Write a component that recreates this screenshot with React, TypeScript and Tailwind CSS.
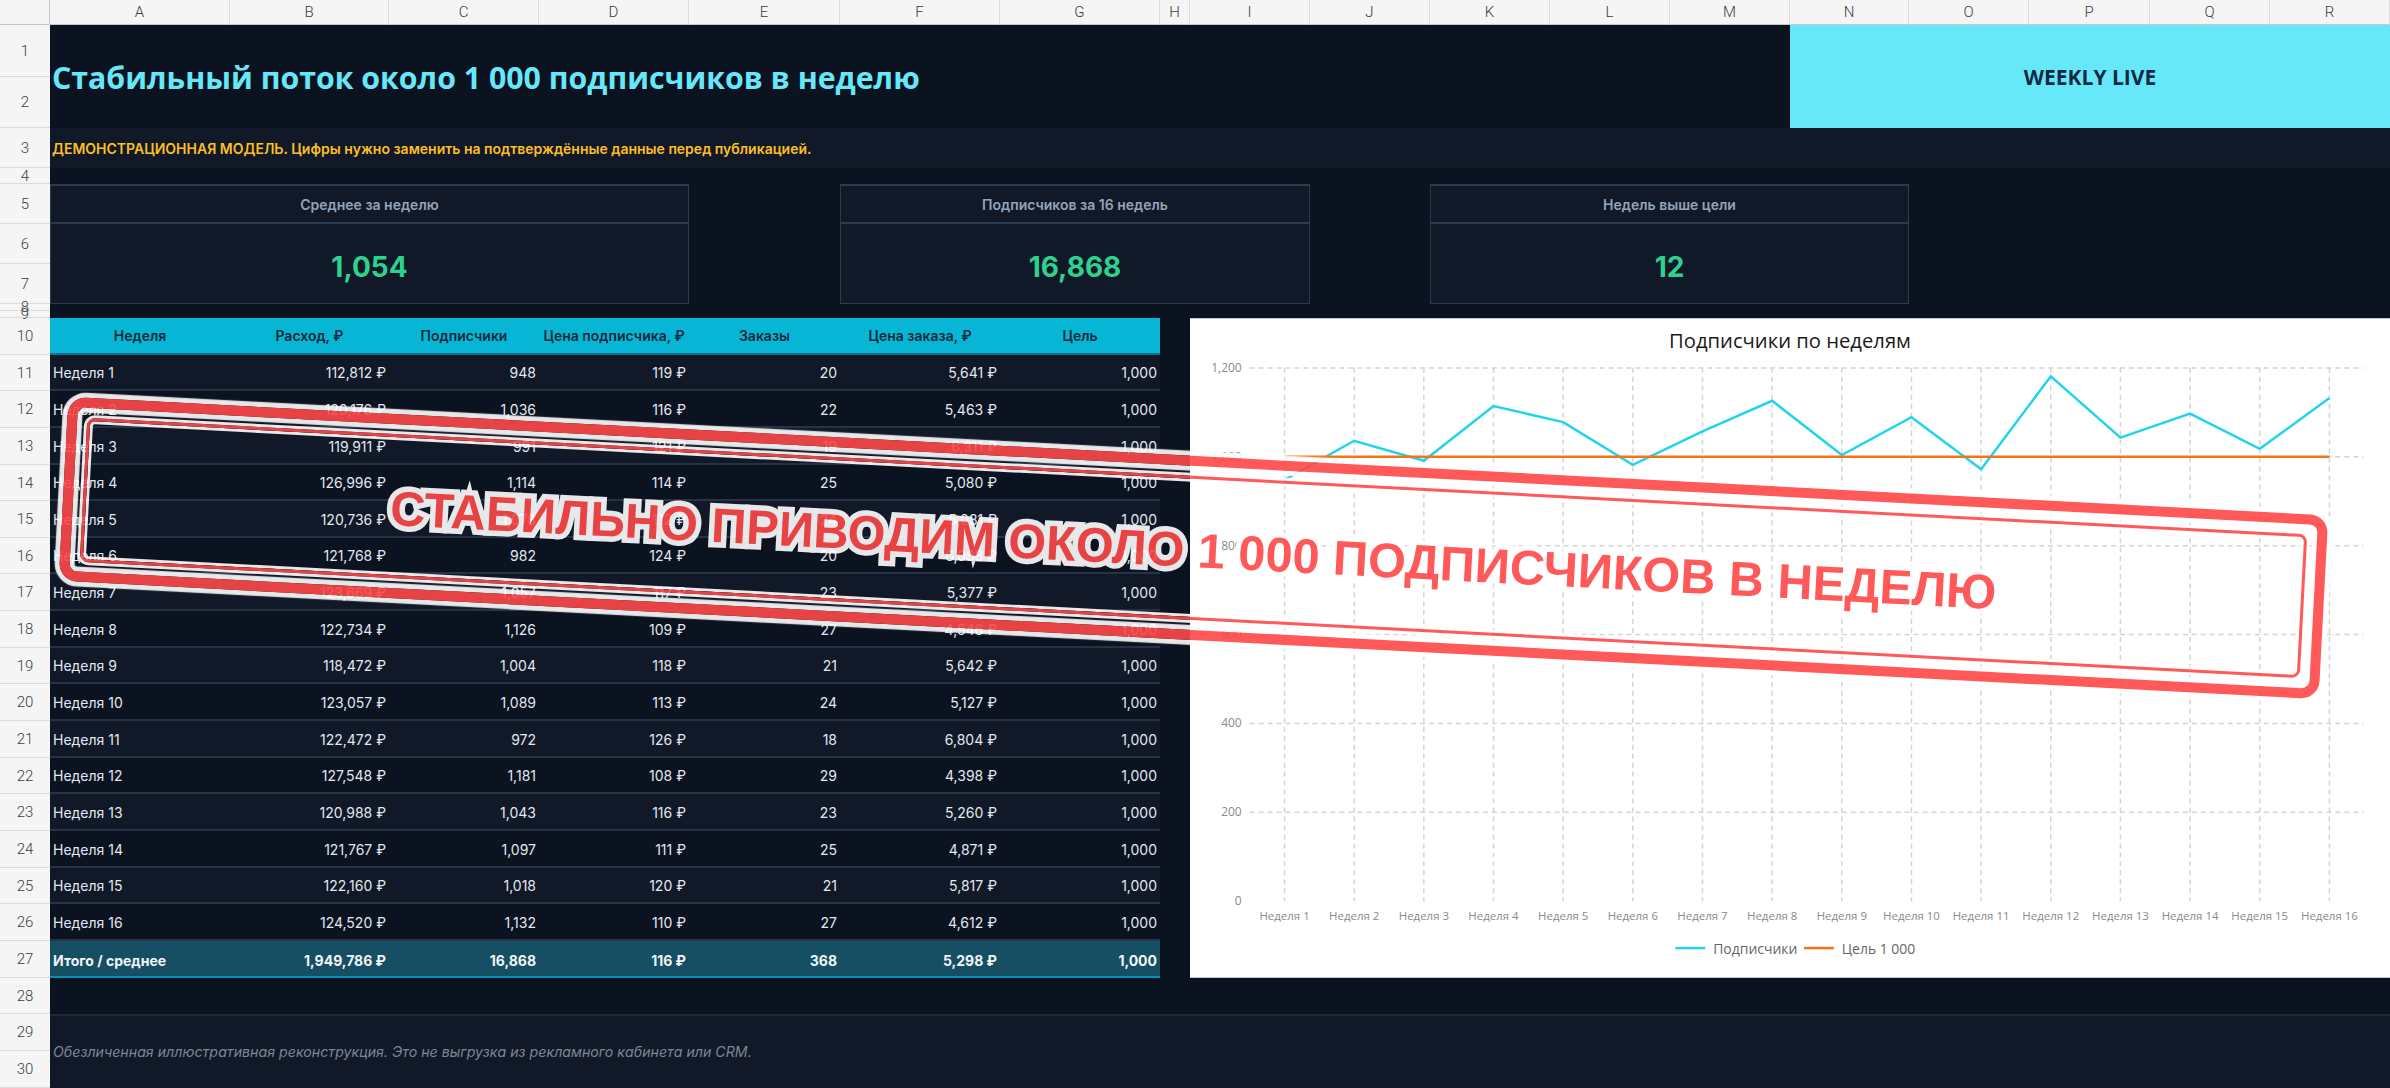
const columnLetters = "ABCDEFGHIJKLMNOPQR".split("");
const rowNumbers = Array.from({ length: 30 }, (_, i) => i + 1);

const weeks = [
  ["112,812 ₽", "948", "119 ₽", "20", "5,641 ₽", 948],
  ["120,176 ₽", "1,036", "116 ₽", "22", "5,463 ₽", 1036],
  ["119,911 ₽", "991", "121 ₽", "19", "6,311 ₽", 991],
  ["126,996 ₽", "1,114", "114 ₽", "25", "5,080 ₽", 1114],
  ["120,736 ₽", "1,078", "112 ₽", "24", "5,031 ₽", 1078],
  ["121,768 ₽", "982", "124 ₽", "20", "6,088 ₽", 982],
  ["123,669 ₽", "1,057", "117 ₽", "23", "5,377 ₽", 1057],
  ["122,734 ₽", "1,126", "109 ₽", "27", "4,546 ₽", 1126],
  ["118,472 ₽", "1,004", "118 ₽", "21", "5,642 ₽", 1004],
  ["123,057 ₽", "1,089", "113 ₽", "24", "5,127 ₽", 1089],
  ["122,472 ₽", "972", "126 ₽", "18", "6,804 ₽", 972],
  ["127,548 ₽", "1,181", "108 ₽", "29", "4,398 ₽", 1181],
  ["120,988 ₽", "1,043", "116 ₽", "23", "5,260 ₽", 1043],
  ["121,767 ₽", "1,097", "111 ₽", "25", "4,871 ₽", 1097],
  ["122,160 ₽", "1,018", "120 ₽", "21", "5,817 ₽", 1018],
  ["124,520 ₽", "1,132", "110 ₽", "27", "4,612 ₽", 1132],
] as const;

const headers = ["Неделя", "Расход, ₽", "Подписчики", "Цена подписчика, ₽", "Заказы", "Цена заказа, ₽", "Цель"];
const totals = ["1,949,786 ₽", "16,868", "116 ₽", "368", "5,298 ₽", "1,000"];

const KpiCard = ({ label, value, className }: { label: string; value: string; className: string }) => (
  <div className={`flex flex-col border border-[#2b3a4e] border-t-2 bg-[#111827] ${className}`}>
    <div className="flex h-[38px] items-center justify-center border-b-2 border-[#2b3a4e] text-[14px] font-semibold text-[#94a3b8]">
      {label}
    </div>
    <div className="flex flex-1 items-center justify-center pt-[6px] text-[28px] font-bold text-[#2dd290]">
      {value}
    </div>
  </div>
);

const xFor = (i: number) => 1283 + i * 69.87;
const yFor = (v: number) => 902 - v * 0.4458;

const WeeklyChart = () => {
  const points = weeks.map((w, i) => `${xFor(i)},${yFor(w[5])}`).join(" ");
  return (
    <svg viewBox="1190 318 1200 660" className="h-full w-full" fontFamily="'Open Sans', sans-serif">
      <text x="1790" y="347" textAnchor="middle" fontSize="20.3" fill="#1a1a1a">
        Подписчики по неделям
      </text>
      {[0, 200, 400, 600, 800, 1000, 1200].map((v) => (
        <g key={v}>
          {v > 0 && (
            <line x1="1248" x2="2365" y1={yFor(v)} y2={yFor(v)} stroke="#d4d4d4" strokeWidth="1.5" strokeDasharray="5 4" />
          )}
          <text x="1240" y={yFor(v) + 4} textAnchor="end" fontSize="12" fill="#8a8a8a">
            {v === 0 ? "0" : v.toLocaleString("en-US")}
          </text>
        </g>
      ))}
      {weeks.map((_, i) => (
        <g key={i}>
          <line x1={xFor(i)} x2={xFor(i)} y1="367" y2="902" stroke="#d4d4d4" strokeWidth="1.5" strokeDasharray="5 4" />
          <text x={xFor(i)} y="921" textAnchor="middle" fontSize="11.5" fill="#8a8a8a">
            {`Неделя ${i + 1}`}
          </text>
        </g>
      ))}
      <polyline points={points} fill="none" stroke="#22d3ee" strokeWidth="2.5" />
      <line x1={xFor(0)} x2={xFor(15)} y1={yFor(1000)} y2={yFor(1000)} stroke="#f97316" strokeWidth="2.5" />
      <line x1="1675" x2="1705" y1="949" y2="949" stroke="#22d3ee" strokeWidth="2.5" />
      <text x="1713" y="955" fontSize="14" fill="#666">
        Подписчики
      </text>
      <line x1="1804" x2="1834" y1="949" y2="949" stroke="#f97316" strokeWidth="2.5" />
      <text x="1842" y="955" fontSize="14" fill="#666">
        Цель 1 000
      </text>
    </svg>
  );
};

const Stamp = () => (
  <div className="absolute left-[62px] top-[456px] flex h-[184px] w-[2263px] rotate-[3deg] rounded-[18px] border-[10px] border-[#ff4848] p-[10px] opacity-90 shadow-[0_0_1px_5px_#fff,inset_0_0_1px_5px_#fff]">
    <div className="flex flex-1 items-center justify-center rounded-[8px] border-[3px] border-[#ff4848] pt-[6px] shadow-[0_0_0_3px_#fff,inset_0_0_0_3px_#fff]">
      <span className="whitespace-nowrap font-['Liberation_Sans',sans-serif] text-[48.7px] font-bold text-[#ff4848] [-webkit-text-stroke:11px_#fff] [paint-order:stroke_fill]">
        СТАБИЛЬНО ПРИВОДИМ ОКОЛО 1 000 ПОДПИСЧИКОВ В НЕДЕЛЮ
      </span>
    </div>
  </div>
);

export default function App() {
  return (
    <div className="relative h-[1088px] w-[2390px] overflow-hidden bg-[#0b1220] font-['Inter',sans-serif]">
      <div className="grid h-full w-full grid-cols-[50px_180px_159px_150px_150px_151px_160px_160px_30px_120px_120px_120px_120px_120px_119px_120px_121px_120px_120px] grid-rows-[25px_52px_51px_40px_16px_40px_40px_40px_7px_7px_37px_36px_37px_37px_36px_37px_36px_37px_37px_36px_37px_37px_36px_37px_37px_36px_37px_37px_36px_37px_37px]">
        {/* row headers */}
        <div className="col-[1/2] row-[1/32] grid grid-rows-subgrid bg-[#f5f5f5] font-['Roboto',sans-serif] text-[15px] font-light text-[#3c3c3c]">
          <div className="border-b border-r border-[#c8c8c8]" />
          {rowNumbers.map((n) => (
            <div key={n} className="flex items-center justify-center overflow-visible border-b border-[#dcdcdc] pt-[1px]">
              {n}
            </div>
          ))}
        </div>

        {/* column headers */}
        <div className="col-[2/20] row-[1/2] grid grid-cols-subgrid bg-[#f5f5f5] font-['Roboto',sans-serif] text-[15px] font-light text-[#3c3c3c]">
          {columnLetters.map((c) => (
            <div key={c} className="flex items-center justify-center border-b border-r border-b-[#c8c8c8] border-r-[#dcdcdc]">
              {c}
            </div>
          ))}
        </div>

        {/* title */}
        <div className="col-[2/15] row-[2/4] flex items-center pl-[2px] pt-[2px] font-['Open_Sans',sans-serif] text-[30.3px] font-bold text-[#67e8f9]">
          Стабильный поток около 1 000 подписчиков в неделю
        </div>
        <div className="col-[15/20] row-[2/4] flex items-center justify-center bg-[#67e8f9] pt-[2px] font-['Open_Sans',sans-serif] text-[21px] font-bold text-[#0f2a44]">
          WEEKLY LIVE
        </div>
        <div className="col-[2/20] row-[4/5] flex items-center bg-[#111827] pl-[2px] pt-[1px] text-[14px] font-semibold text-[#fbbf24]">
          ДЕМОНСТРАЦИОННАЯ МОДЕЛЬ. Цифры нужно заменить на подтверждённые данные перед публикацией.
        </div>

        <KpiCard className="col-[2/6] row-[6/9]" label="Среднее за неделю" value="1,054" />
        <KpiCard className="col-[7/11] row-[6/9]" label="Подписчиков за 16 недель" value="16,868" />
        <KpiCard className="col-[12/16] row-[6/9]" label="Недель выше цели" value="12" />

        {/* weekly table */}
        <div className="col-[2/9] row-[11/29] grid grid-cols-subgrid grid-rows-subgrid text-[14px] text-[#e2e8f0]">
          <div className="col-span-full grid grid-cols-subgrid border-b-2 border-[#0e7490] bg-[#06b6d4] text-[14px] font-semibold text-[#0f2a3d]">
            {headers.map((h) => (
              <div key={h} className="flex items-center justify-center">
                {h}
              </div>
            ))}
          </div>
          {weeks.map((w, i) => (
            <div
              key={i}
              className={`col-span-full grid grid-cols-subgrid items-center border-b-2 border-[#263347] pt-[1px] ${
                i % 2 === 0 ? "bg-[#111827]" : "bg-[#0b1220]"
              }`}
            >
              <div className="pl-[3px]">{`Неделя ${i + 1}`}</div>
              {w.slice(0, 5).map((v, j) => (
                <div key={j} className="pr-[3px] text-right">
                  {v}
                </div>
              ))}
              <div className="pr-[3px] text-right">1,000</div>
            </div>
          ))}
          <div className="col-span-full grid grid-cols-subgrid items-center border-b-2 border-[#0891b2] bg-[#164e63] pt-[3px] font-bold text-[#f1f5f9]">
            <div className="pl-[3px]">Итого / среднее</div>
            {totals.map((v) => (
              <div key={v} className="pr-[3px] text-right">
                {v}
              </div>
            ))}
          </div>
        </div>

        {/* chart */}
        <div className="col-[10/20] row-[11/29] border-y border-[#c4c8ce] bg-white">
          <WeeklyChart />
        </div>

        {/* footnote */}
        <div className="col-[2/20] row-[30/32] flex items-center border-t-2 border-[#1f2937] bg-[#111827] pl-[3px] text-[14.2px] italic text-[#7a8798]">
          Обезличенная иллюстративная реконструкция. Это не выгрузка из рекламного кабинета или CRM.
        </div>
      </div>

      <Stamp />
    </div>
  );
}
